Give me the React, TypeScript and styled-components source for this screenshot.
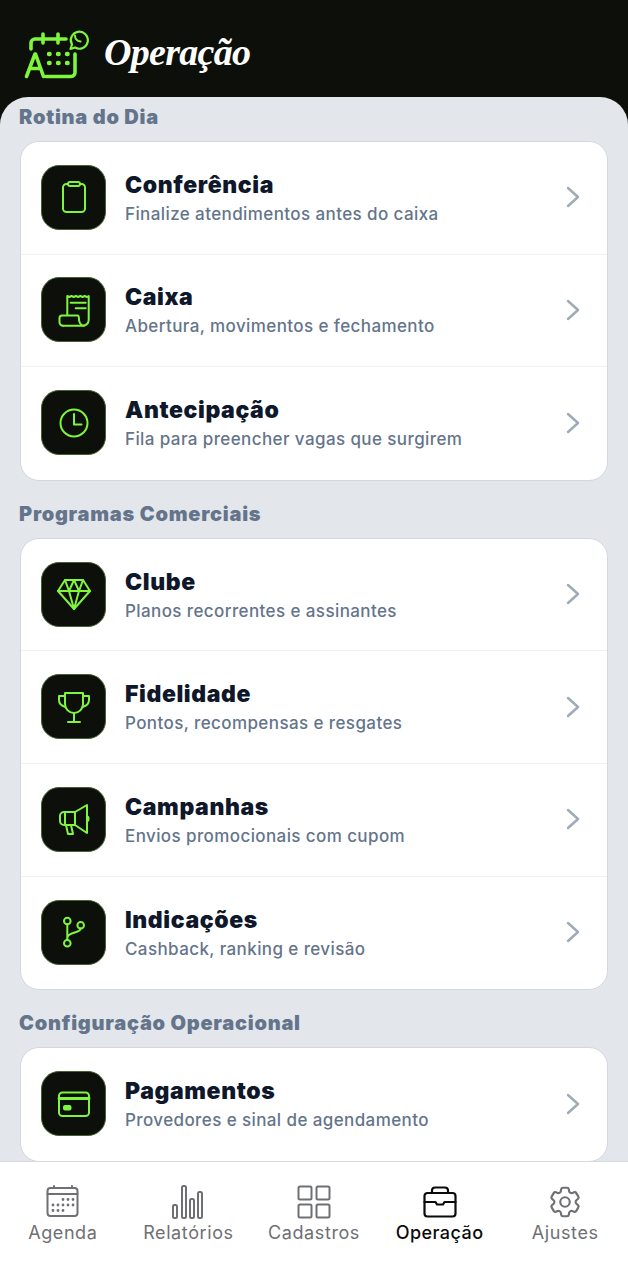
import React from "react";
import styled, { createGlobalStyle } from "styled-components";
import { HiOutlineCog6Tooth } from "react-icons/hi2";

const GREEN = "#7ff53c";

const GlobalStyle = createGlobalStyle`
  html, body {
    margin: 0;
    padding: 0;
    background: #0d0f0a;
    font-family: Inter, "Noto Sans", sans-serif;
  }
`;

function Glyph({ children }: { children: React.ReactNode }) {
  return (
    <svg width="36" height="36" viewBox="-18 -18 36 36" fill="none" stroke={GREEN} strokeWidth="2" strokeLinecap="round" strokeLinejoin="round">
      {children}
    </svg>
  );
}

const icons: Record<string, React.ReactNode> = {
  clipboard: (
    <>
      <rect x="-11" y="-13" width="22" height="28" rx="3.5" />
      <rect x="-6" y="-15" width="12" height="4" rx="2" fill="#0d0f0a" />
    </>
  ),
  receipt: (
    <>
      <path d="M-6.7 5V-14l2 1 2.2-1 2.2 1 2.2-1 2.2 1 2.2-1 2.2 1 2.2-1 2.2 1 1.8-1V10a5.7 5.7 0 0 1-5.7 5.7H-11" />
      <path d="M-11 15.7a3.5 3.5 0 0 1-3.5-3.5V8a2.5 2.5 0 0 1 2.5-2.5H3.5C5 5.500 5 7 5 9.500c0 3 2 6.200 5 6.200" />
      <path d="M-3.300-7.300H11.700M1.700-1.700H11.700" />
    </>
  ),
  clock: (
    <>
      <circle cx="0" cy="0" r="13.500" />
      <path d="M0-9V1.500H7.500" />
    </>
  ),
  gem: (
    <>
      <path d="M-9-14H9L16-3 0 15-16-3Z" />
      <path d="M-16-3H16M-9-14-5-3 0-14 5-3 9-14M-5-3 0 15 5-3" />
    </>
  ),
  trophy: (
    <>
      <path d="M-9-14H9V-3A9 9 0 0 1-9-3Z" />
      <path d="M-9-11H-15V-7C-15-3-12-1-8.500 0M9-11H15V-7C15-3 12-1 8.500 0" />
      <path d="M0 6V15M-6 15H6" />
    </>
  ),
  megaphone: (
    <>
      <path d="M1-7 13-14V14L1 6Z" />
      <path d="M1-7H-10A4 4 0 0 0-14-3V2A4 4 0 0 0-10 6H1" />
      <path d="M-9-7V6M-8 6-6 15H-1L-3 6M13-2.500C15-2.500 15 2 13 2" />
    </>
  ),
  branch: (
    <>
      <circle cx="-6.700" cy="-11" r="3.300" />
      <circle cx="6.700" cy="-6.700" r="3.300" />
      <circle cx="-6.700" cy="11.300" r="3.300" />
      <path d="M-6.700-7.700V8M6.700-3.400C6.700 1.500-6.700-.5-6.700 6" />
    </>
  ),
  card: (
    <>
      <rect x="-15" y="-11.500" width="30" height="23.500" rx="3.500" />
      <path d="M-15-5.500H15" strokeWidth="2.800" />
      <rect x="-10" y="2" width="6.500" height="3.500" rx="1" fill={GREEN} />
    </>
  ),
};

const sections = [
  {
    title: "Rotina do Dia",
    items: [
      { icon: "clipboard", name: "Conferência", text: "Finalize atendimentos antes do caixa" },
      { icon: "receipt", name: "Caixa", text: "Abertura, movimentos e fechamento" },
      { icon: "clock", name: "Antecipação", text: "Fila para preencher vagas que surgirem" },
    ],
  },
  {
    title: "Programas Comerciais",
    items: [
      { icon: "gem", name: "Clube", text: "Planos recorrentes e assinantes" },
      { icon: "trophy", name: "Fidelidade", text: "Pontos, recompensas e resgates" },
      { icon: "megaphone", name: "Campanhas", text: "Envios promocionais com cupom" },
      { icon: "branch", name: "Indicações", text: "Cashback, ranking e revisão" },
    ],
  },
  {
    title: "Configuração Operacional",
    items: [{ icon: "card", name: "Pagamentos", text: "Provedores e sinal de agendamento" }],
  },
];

function TabSvg({ children }: { children: React.ReactNode }) {
  return (
    <svg width="34" height="34" viewBox="0 0 34 34" fill="none" stroke="currentColor" strokeWidth="2" strokeLinecap="round" strokeLinejoin="round">
      {children}
    </svg>
  );
}

const tabs: { label: string; active?: boolean; icon: React.ReactNode }[] = [
  {
    label: "Agenda",
    icon: (
      <TabSvg>
        <rect x="1.500" y="3" width="30" height="28" rx="3" />
        <path d="M1.500 9H31.500M8 1V3M26 1V3" />
        <path
          strokeWidth="2.800"
          d="M17 14.500h.01M22 14.500h.01M27 14.500h.01M7 20h.01M12 20h.01M17 20h.01M22 20h.01M27 20h.01M7 25.500h.01M12 25.500h.01M17 25.500h.01"
        />
      </TabSvg>
    ),
  },
  {
    label: "Relatórios",
    icon: (
      <TabSvg>
        <rect x="2" y="20" width="4" height="13" rx="1.500" />
        <rect x="11" y="1" width="4" height="32" rx="1.500" />
        <rect x="19" y="14" width="4" height="19" rx="1.500" />
        <rect x="27" y="7" width="4" height="26" rx="1.500" />
      </TabSvg>
    ),
  },
  {
    label: "Cadastros",
    icon: (
      <TabSvg>
        <rect x="1.500" y="1.500" width="13" height="13" rx="1.500" />
        <rect x="19.500" y="1.500" width="13" height="13" rx="1.500" />
        <rect x="1.500" y="19.500" width="13" height="13" rx="1.500" />
        <rect x="19.500" y="19.500" width="13" height="13" rx="1.500" />
      </TabSvg>
    ),
  },
  {
    label: "Operação",
    active: true,
    icon: (
      <TabSvg>
        <path strokeWidth="2.200" d="M4.500 8H29.500A3 3 0 0 1 32.500 11V28.500A3 3 0 0 1 29.500 31.500H4.500A3 3 0 0 1 1.500 28.500V11A3 3 0 0 1 4.500 8Z" />
        <path strokeWidth="2.200" d="M9 8V5A3 3 0 0 1 12 2.500H22A3 3 0 0 1 25 5V8M1.500 17H12.500L14 19.500H20L21.500 17H32.500" />
      </TabSvg>
    ),
  },
  {
    label: "Ajustes",
    icon: <HiOutlineCog6Tooth size={38} strokeWidth={1.35} />,
  },
];

export default function App() {
  return (
    <>
      <GlobalStyle />
      <Page>
        <Header>
          <svg width="66" height="54" viewBox="0 0 66 54" fill="none" stroke={GREEN} strokeWidth="3.600" strokeLinecap="round" strokeLinejoin="round">
            <path d="M7 22V16A4 4 0 0 1 11 12H42M19 7V16M34 7V16" />
            <path d="M51 27V45A4 4 0 0 1 47 49.500H22" />
            <path d="M2.500 49.500 11 27H11.500L19.500 49.500M5.500 41.500H16.500" />
            <path strokeWidth="4.400" d="M25 27h.6M34 27h.6M43 27h.6M25 36h.6M34 36h.6M43 36h.6" />
            <path strokeWidth="2.200" d="M46.500 22 48 17.500A8.500 8.500 0 1 1 51 20.500Z" />
            <path strokeWidth="2" d="M51 8.500C51 12 53 14 56.500 14.500" />
          </svg>
          <Heading>Operação</Heading>
        </Header>
        <Sheet>
          {sections.map((section) => (
            <Section key={section.title}>
              <SectionTitle>{section.title}</SectionTitle>
              <Card>
                {section.items.map((item) => (
                  <Row key={item.name}>
                    <Tile>
                      <Glyph>{icons[item.icon]}</Glyph>
                    </Tile>
                    <RowText>
                      <RowName>{item.name}</RowName>
                      <RowSub>{item.text}</RowSub>
                    </RowText>
                    <svg width="16" height="22" viewBox="0 0 16 22" fill="none" stroke="#a0abb9" strokeWidth="2.500" strokeLinecap="round" strokeLinejoin="round">
                      <path d="M3 2 13 11 3 20" />
                    </svg>
                  </Row>
                ))}
              </Card>
            </Section>
          ))}
        </Sheet>
        <TabBar>
          {tabs.map((tab) => (
            <Tab key={tab.label} $active={tab.active}>
              <TabIcon>{tab.icon}</TabIcon>
              <span>{tab.label}</span>
            </Tab>
          ))}
        </TabBar>
      </Page>
    </>
  );
}

const Page = styled.div`
  display: flex;
  flex-direction: column;
  width: 628px;
  height: 1280px;
  overflow: hidden;
  background: #0d0f0a;
`;

const Header = styled.header`
  flex: none;
  display: flex;
  align-items: flex-start;
  gap: 14px;
  height: 97px;
  box-sizing: border-box;
  padding: 27px 0 0 24px;
`;

const Heading = styled.h1`
  margin: 1px 0 0;
  font-family: "Liberation Serif", serif;
  font-style: italic;
  font-weight: 700;
  font-size: 38px;
  line-height: 48px;
  letter-spacing: -0.7px;
  color: #ffffff;
`;

const Sheet = styled.main`
  flex: 1;
  min-height: 0;
  overflow: hidden;
  display: flex;
  flex-direction: column;
  gap: 20px;
  padding: 7px 20px 0;
  background: #e3e6eb;
  border-radius: 28px 28px 0 0;
`;

const Section = styled.section`
  flex: none;
`;

const SectionTitle = styled.h2`
  margin: 0 0 11px -1px;
  font-size: 20px;
  line-height: 26px;
  font-weight: 900;
  letter-spacing: 0.75px;
  color: #64748b;
`;

const Card = styled.div`
  background: #ffffff;
  border: 1px solid #d3d8e0;
  border-radius: 19px;
  overflow: hidden;
`;

const Row = styled.div`
  display: flex;
  align-items: center;
  box-sizing: border-box;
  height: 112.6px;
  padding: 0 26px 1px 20px;
  border-bottom: 1px solid #eef0f3;

  &:last-child {
    border-bottom: 0;
  }
`;

const Tile = styled.div`
  flex: none;
  display: flex;
  align-items: center;
  justify-content: center;
  width: 65px;
  height: 65px;
  box-sizing: border-box;
  border: 1px solid #46602f;
  border-radius: 18px;
  background: #0d0f0a;
`;

const RowText = styled.div`
  flex: 1;
  display: flex;
  flex-direction: column;
  gap: 4px;
  margin-left: 19px;
  margin-top: 1px;
`;

const RowName = styled.div`
  font-size: 23px;
  line-height: 28px;
  font-weight: 900;
  letter-spacing: 0.6px;
  color: #0f172a;
`;

const RowSub = styled.div`
  font-size: 17px;
  line-height: 22px;
  font-weight: 500;
  letter-spacing: 0.4px;
  color: #64748b;
`;

const TabBar = styled.nav`
  flex: none;
  display: grid;
  grid-template-columns: repeat(5, 1fr);
  height: 119px;
  box-sizing: border-box;
  padding-top: 22px;
  background: #ffffff;
  border-top: 1px solid #d6d9de;
`;

const Tab = styled.div<{ $active?: boolean }>`
  display: flex;
  flex-direction: column;
  align-items: center;
  gap: 1px;
  font-size: 18px;
  line-height: 24px;
  letter-spacing: ${(p) => (p.$active ? "0.45px" : "0.6px")};
  font-weight: ${(p) => (p.$active ? 500 : 400)};
  color: ${(p) => (p.$active ? "#0b0b0c" : "#6f7074")};
`;

const TabIcon = styled.div`
  display: flex;
  align-items: center;
  justify-content: center;
  height: 36px;
`;
